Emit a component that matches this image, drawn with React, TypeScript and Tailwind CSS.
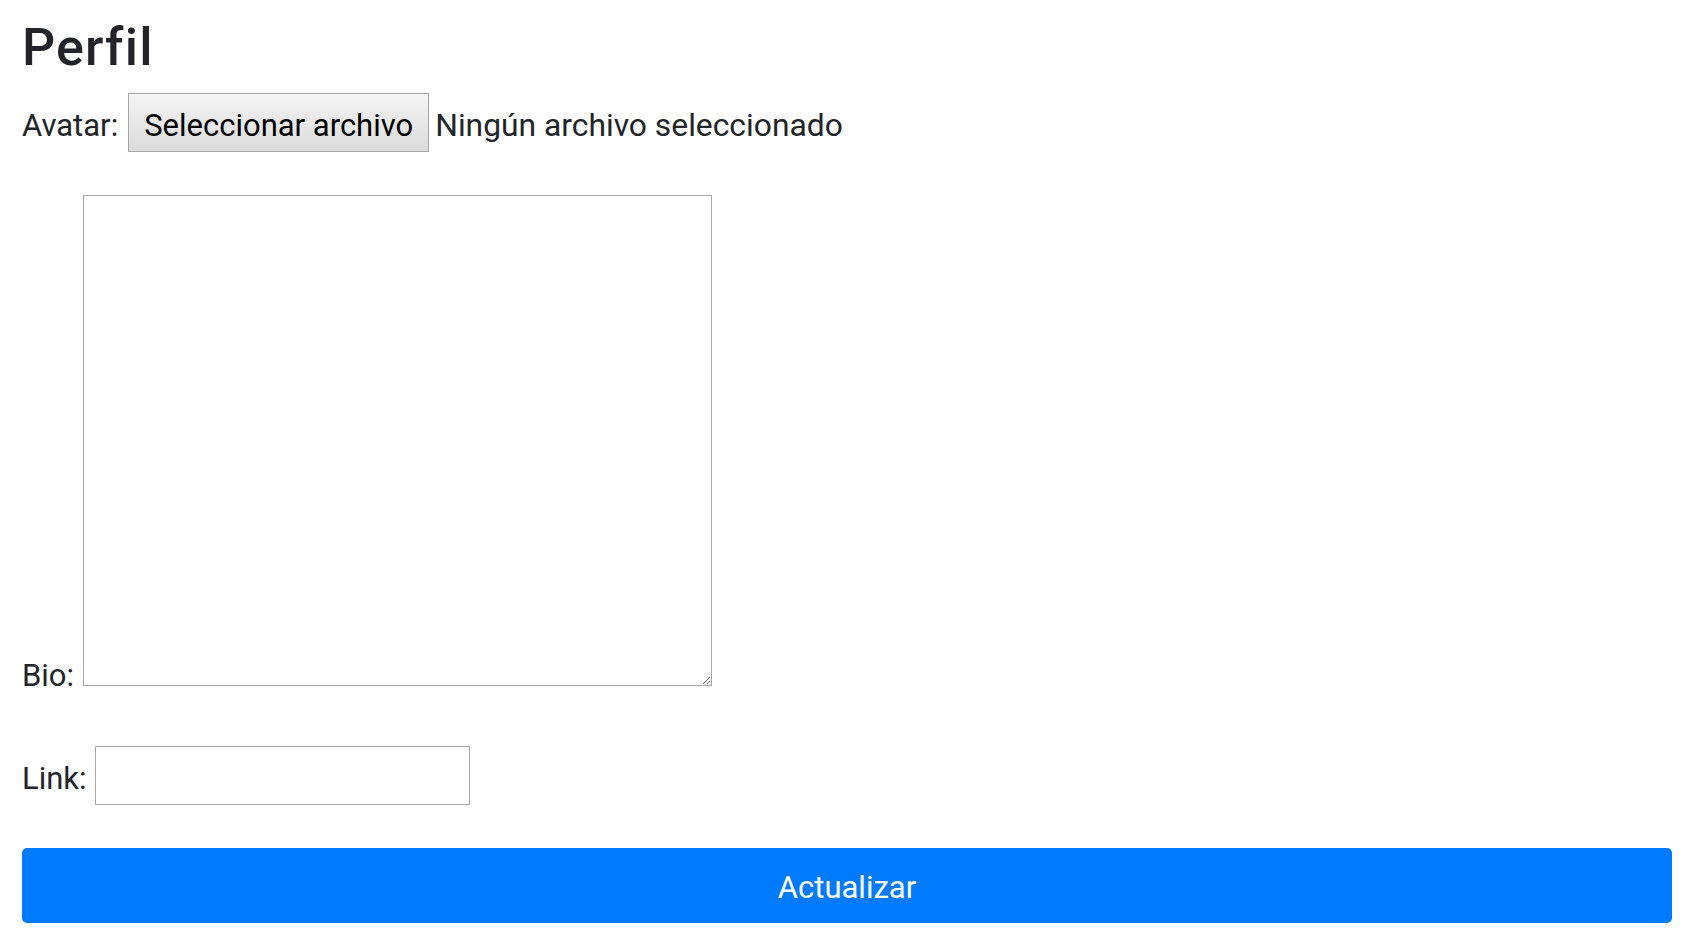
import React from "react";

export default function App() {
  return (
    <div
      className="min-h-screen bg-white text-[#212529] pl-[22px] pr-[14px] pt-[22px]"
      style={{ fontFamily: "Roboto, 'Noto Sans', sans-serif" }}
    >
      <h1 className="text-[52px] font-medium leading-none m-0 tracking-[1.2px]">Perfil</h1>

      <div className="mt-[19px] flex items-end text-[31px]">
        <label className="leading-none mb-[11px]">Avatar:</label>
        <button
          type="button"
          className="ml-[10px] h-[59px] pt-[16px] pb-[10px] px-[15px] leading-none text-black border border-[#a6a6a6] bg-gradient-to-b from-[#f4f4f4] to-[#dcdcdc] whitespace-nowrap"
        >
          Seleccionar archivo
        </button>
        <span className="ml-[6px] leading-none mb-[10px] whitespace-nowrap text-[31.8px]">
          Ningún archivo seleccionado
        </span>
      </div>

      <div className="mt-[43px] flex items-end text-[31px]">
        <label className="leading-none -mb-[5px]">Bio:</label>
        <textarea className="ml-[9px] w-[629px] h-[491px] border border-[#a9a9a9] bg-white outline-none block" />
      </div>

      <div className="mt-[60px] flex items-end text-[31px]">
        <label className="leading-none mb-[11px]">Link:</label>
        <input
          type="text"
          className="ml-[8px] w-[375px] h-[59px] border border-[#a9a9a9] bg-white outline-none px-2 text-[31px]"
        />
      </div>

      <button
        type="submit"
        className="mt-[43px] w-[1650px] h-[75px] rounded-[5px] bg-[#007bff] text-white text-[31px] leading-none pt-[4px] flex items-center justify-center"
      >
        Actualizar
      </button>
    </div>
  );
}
